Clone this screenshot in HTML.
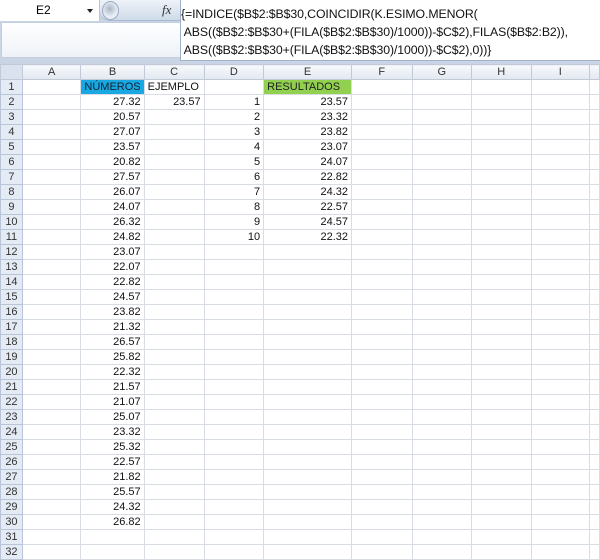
<!DOCTYPE html>
<html><head><meta charset="utf-8"><style>
body{margin:0;width:600px;height:560px;overflow:hidden;background:#fff;font-family:"Liberation Sans",sans-serif;position:relative}
.fb{position:absolute;left:0;top:0;width:600px;height:64px;background:#c9d5e4}
.nb{position:absolute;left:0;top:0;width:99px;height:21px;background:#fff;border-right:1px solid #b7c5d8;font-size:12px;line-height:21px}
.nb span{position:absolute;left:36px}
.nb i{position:absolute;left:87px;top:9px;width:0;height:0;border-left:3px solid transparent;border-right:3px solid transparent;border-top:4px solid #222}
.tb{position:absolute;left:100px;top:0;width:80px;height:20px;background:linear-gradient(#eef2f8,#cfdbea);border-bottom:1px solid #a9b9cf;border-radius:0 0 0 10px}
.circ{position:absolute;left:102px;top:1px;width:15px;height:17px;border-radius:50%;background:radial-gradient(circle at 45% 40%,#aab6c4,#e8eef5 60%);border:1px solid #9aabc0}
.fx{position:absolute;left:162px;top:2px;font-family:"Liberation Serif",serif;font-style:italic;font-size:13px;color:#333}
.lw{position:absolute;left:1px;top:22px;width:178px;height:34px;background:linear-gradient(#fff,#eef2f8);border:1px solid #c4cfdd}
.fm{position:absolute;left:180px;top:0;width:420px;height:55px;background:#fff;border-left:1px solid #9fb1c7;border-bottom:1px solid #9fb1c7;font-size:12.3px;color:#111;line-height:18px;padding-top:5px;white-space:pre;letter-spacing:-.1px}
table{position:absolute;left:0;top:64px;border-collapse:collapse;table-layout:fixed;font-size:11px}
td{height:14px;border:1px solid #d8dde4;padding:0 3px;white-space:nowrap;overflow:hidden;text-align:right;line-height:14px;color:#111}
tr.h td{height:14px;background:linear-gradient(#f7f9fc,#e2e8f0);border-color:#c1cad6;text-align:center;color:#333}
td.r{background:#e4ebf5;border-color:#b9c5d6;text-align:center;color:#333;padding:0}
.bl{background:#19a8e2;color:#123}
.gr{background:#92d050;text-align:left;color:#222}
.l{text-align:left}
</style></head><body>
<div class="fb">
<div class="nb"><span>E2</span><i></i></div>
<div class="tb"></div><div class="circ"></div><div class="fx">fx</div>
<div class="lw"></div>
<div class="fm">{=INDICE($B$2:$B$30,COINCIDIR(K.ESIMO.MENOR(
 ABS(($B$2:$B$30+(FILA($B$2:$B$30)/1000))-$C$2),FILAS($B$2:B2)),
 ABS(($B$2:$B$30+(FILA($B$2:$B$30)/1000))-$C$2),0))}</div>
</div>
<table>
<colgroup><col style="width:22px"><col style="width:59px"><col style="width:60px"><col style="width:60px"><col style="width:60px"><col style="width:88px"><col style="width:61px"><col style="width:60px"><col style="width:60px"><col style="width:59px"><col style="width:10px"></colgroup>
<tr class="h"><td style="background:#d9e2ee"></td><td>A</td><td>B</td><td>C</td><td>D</td><td>E</td><td>F</td><td>G</td><td>H</td><td>I</td><td></td></tr>
<tr><td class="r">1</td><td></td><td class="bl">NÚMEROS</td><td class="l">EJEMPLO</td><td></td><td class="gr">RESULTADOS</td><td></td><td></td><td></td><td></td><td></td></tr>
<tr><td class="r">2</td><td></td><td>27.32</td><td>23.57</td><td>1</td><td>23.57</td><td></td><td></td><td></td><td></td><td></td></tr>
<tr><td class="r">3</td><td></td><td>20.57</td><td></td><td>2</td><td>23.32</td><td></td><td></td><td></td><td></td><td></td></tr>
<tr><td class="r">4</td><td></td><td>27.07</td><td></td><td>3</td><td>23.82</td><td></td><td></td><td></td><td></td><td></td></tr>
<tr><td class="r">5</td><td></td><td>23.57</td><td></td><td>4</td><td>23.07</td><td></td><td></td><td></td><td></td><td></td></tr>
<tr><td class="r">6</td><td></td><td>20.82</td><td></td><td>5</td><td>24.07</td><td></td><td></td><td></td><td></td><td></td></tr>
<tr><td class="r">7</td><td></td><td>27.57</td><td></td><td>6</td><td>22.82</td><td></td><td></td><td></td><td></td><td></td></tr>
<tr><td class="r">8</td><td></td><td>26.07</td><td></td><td>7</td><td>24.32</td><td></td><td></td><td></td><td></td><td></td></tr>
<tr><td class="r">9</td><td></td><td>24.07</td><td></td><td>8</td><td>22.57</td><td></td><td></td><td></td><td></td><td></td></tr>
<tr><td class="r">10</td><td></td><td>26.32</td><td></td><td>9</td><td>24.57</td><td></td><td></td><td></td><td></td><td></td></tr>
<tr><td class="r">11</td><td></td><td>24.82</td><td></td><td>10</td><td>22.32</td><td></td><td></td><td></td><td></td><td></td></tr>
<tr><td class="r">12</td><td></td><td>23.07</td><td></td><td></td><td></td><td></td><td></td><td></td><td></td><td></td></tr>
<tr><td class="r">13</td><td></td><td>22.07</td><td></td><td></td><td></td><td></td><td></td><td></td><td></td><td></td></tr>
<tr><td class="r">14</td><td></td><td>22.82</td><td></td><td></td><td></td><td></td><td></td><td></td><td></td><td></td></tr>
<tr><td class="r">15</td><td></td><td>24.57</td><td></td><td></td><td></td><td></td><td></td><td></td><td></td><td></td></tr>
<tr><td class="r">16</td><td></td><td>23.82</td><td></td><td></td><td></td><td></td><td></td><td></td><td></td><td></td></tr>
<tr><td class="r">17</td><td></td><td>21.32</td><td></td><td></td><td></td><td></td><td></td><td></td><td></td><td></td></tr>
<tr><td class="r">18</td><td></td><td>26.57</td><td></td><td></td><td></td><td></td><td></td><td></td><td></td><td></td></tr>
<tr><td class="r">19</td><td></td><td>25.82</td><td></td><td></td><td></td><td></td><td></td><td></td><td></td><td></td></tr>
<tr><td class="r">20</td><td></td><td>22.32</td><td></td><td></td><td></td><td></td><td></td><td></td><td></td><td></td></tr>
<tr><td class="r">21</td><td></td><td>21.57</td><td></td><td></td><td></td><td></td><td></td><td></td><td></td><td></td></tr>
<tr><td class="r">22</td><td></td><td>21.07</td><td></td><td></td><td></td><td></td><td></td><td></td><td></td><td></td></tr>
<tr><td class="r">23</td><td></td><td>25.07</td><td></td><td></td><td></td><td></td><td></td><td></td><td></td><td></td></tr>
<tr><td class="r">24</td><td></td><td>23.32</td><td></td><td></td><td></td><td></td><td></td><td></td><td></td><td></td></tr>
<tr><td class="r">25</td><td></td><td>25.32</td><td></td><td></td><td></td><td></td><td></td><td></td><td></td><td></td></tr>
<tr><td class="r">26</td><td></td><td>22.57</td><td></td><td></td><td></td><td></td><td></td><td></td><td></td><td></td></tr>
<tr><td class="r">27</td><td></td><td>21.82</td><td></td><td></td><td></td><td></td><td></td><td></td><td></td><td></td></tr>
<tr><td class="r">28</td><td></td><td>25.57</td><td></td><td></td><td></td><td></td><td></td><td></td><td></td><td></td></tr>
<tr><td class="r">29</td><td></td><td>24.32</td><td></td><td></td><td></td><td></td><td></td><td></td><td></td><td></td></tr>
<tr><td class="r">30</td><td></td><td>26.82</td><td></td><td></td><td></td><td></td><td></td><td></td><td></td><td></td></tr>
<tr><td class="r">31</td><td></td><td></td><td></td><td></td><td></td><td></td><td></td><td></td><td></td><td></td></tr>
<tr><td class="r">32</td><td></td><td></td><td></td><td></td><td></td><td></td><td></td><td></td><td></td><td></td></tr>
</table>
</body></html>
